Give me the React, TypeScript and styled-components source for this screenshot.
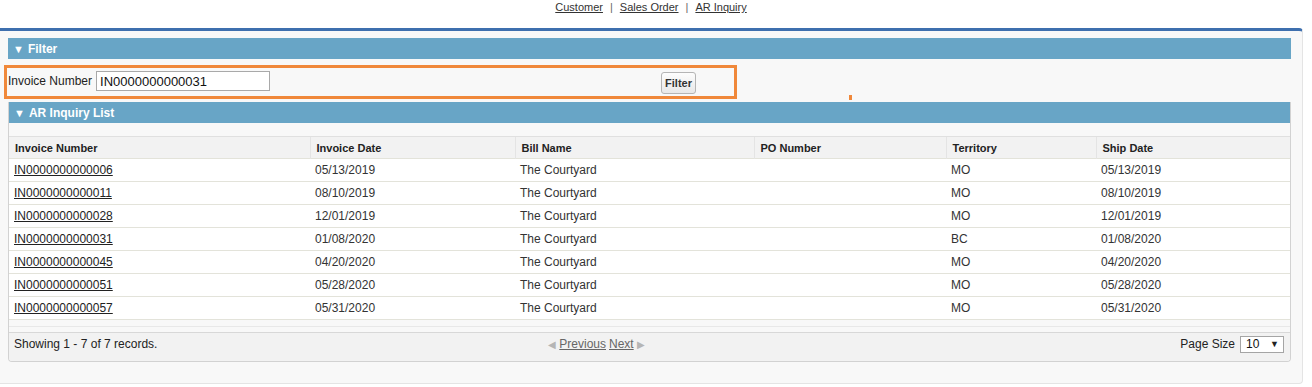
import React from 'react';
import styled, { createGlobalStyle } from 'styled-components';

const GlobalStyle = createGlobalStyle`
  body {
    margin: 0;
    background: #fff;
    font-family: "Liberation Sans", Arial, sans-serif;
    color: #333;
  }
`;

const rows = [
  { no: 'IN0000000000006', date: '05/13/2019', terr: 'MO', ship: '05/13/2019' },
  { no: 'IN0000000000011', date: '08/10/2019', terr: 'MO', ship: '08/10/2019' },
  { no: 'IN0000000000028', date: '12/01/2019', terr: 'MO', ship: '12/01/2019' },
  { no: 'IN0000000000031', date: '01/08/2020', terr: 'BC', ship: '01/08/2020' },
  { no: 'IN0000000000045', date: '04/20/2020', terr: 'MO', ship: '04/20/2020' },
  { no: 'IN0000000000051', date: '05/28/2020', terr: 'MO', ship: '05/28/2020' },
  { no: 'IN0000000000057', date: '05/31/2020', terr: 'MO', ship: '05/31/2020' },
];

const columns = [
  { label: 'Invoice Number', width: 301 },
  { label: 'Invoice Date', width: 205 },
  { label: 'Bill Name', width: 239 },
  { label: 'PO Number', width: 192 },
  { label: 'Territory', width: 150 },
  { label: 'Ship Date', width: 0 },
];

function App() {
  return (
    <>
      <GlobalStyle />
      <TopNav>
        <NavLink href="#">Customer</NavLink>
        <Sep>|</Sep>
        <NavLink href="#">Sales Order</NavLink>
        <Sep>|</Sep>
        <NavLink href="#">AR Inquiry</NavLink>
      </TopNav>
      <Panel>
        <SectionHeader><Caret>▼</Caret>Filter</SectionHeader>
        <FilterRow>
          <Highlight />
          <Mark />
          <Label>Invoice Number</Label>
          <TextInput defaultValue="IN0000000000031" />
          <Button>Filter</Button>
        </FilterRow>
        <ListPanel>
          <SectionHeader><Caret>▼</Caret>AR Inquiry List</SectionHeader>
          <Grid>
            <colgroup>
              {columns.map((c) => (
                <col key={c.label} style={c.width ? { width: c.width } : undefined} />
              ))}
            </colgroup>
            <thead>
              <tr>
                {columns.map((c) => (
                  <Th key={c.label}>{c.label}</Th>
                ))}
              </tr>
            </thead>
            <tbody>
              {rows.map((r) => (
                <tr key={r.no}>
                  <Td><RowLink href="#">{r.no}</RowLink></Td>
                  <Td>{r.date}</Td>
                  <Td>The Courtyard</Td>
                  <Td></Td>
                  <Td>{r.terr}</Td>
                  <Td>{r.ship}</Td>
                </tr>
              ))}
            </tbody>
          </Grid>
          <Strip />
          <Footer>
            <span>Showing 1 - 7 of 7 records.</span>
            <Pager>
              <Arrow>◀</Arrow>
              <PageLink href="#">Previous</PageLink>
              <PageLink href="#">Next</PageLink>
              <Arrow>▶</Arrow>
            </Pager>
            <PageSize>
              Page Size
              <Select>
                <span>10</span>
                <SelectArrow>▼</SelectArrow>
              </Select>
            </PageSize>
          </Footer>
        </ListPanel>
      </Panel>
    </>
  );
}

const TopNav = styled.nav`
  width: 1302px;
  height: 28px;
  display: flex;
  justify-content: center;
  align-items: flex-start;
  gap: 7px;
  font-size: 11px;
  line-height: 14px;
  color: #555;
`;

const NavLink = styled.a`
  color: #333;
  text-decoration: underline;
`;

const Sep = styled.span`
  color: #666;
`;

const Panel = styled.section`
  width: 1283px;
  border-top: 3px solid #3e6fae;
  border-right: 1px solid #e4e4e4;
  border-bottom: 1px solid #e4e4e4;
  border-radius: 0 4px 4px 0;
  background: #f8f8f8;
  padding: 7px 11px 21px 8px;
`;

const SectionHeader = styled.div`
  height: 21px;
  display: flex;
  align-items: center;
  background: #68a5c6;
  color: #fff;
  font-size: 12px;
  font-weight: bold;
  padding-left: 5px;
`;

const Caret = styled.span`
  font-size: 11px;
  margin-right: 4px;
`;

const FilterRow = styled.div`
  position: relative;
  height: 43px;
  display: flex;
  align-items: center;
  font-size: 12px;
  color: #222;
`;

const Highlight = styled.div`
  position: absolute;
  left: -4px;
  top: 6px;
  width: 727px;
  height: 28px;
  border: 3px solid #f0883a;
  pointer-events: none;
`;

const Mark = styled.div`
  position: absolute;
  left: 841px;
  top: 36px;
  width: 3px;
  height: 5px;
  background: #f0883a;
`;

const Label = styled.label`
  margin-right: 4px;
  margin-top: 1px;
`;

const TextInput = styled.input`
  box-sizing: border-box;
  width: 174px;
  height: 20px;
  border: 1px solid #a9a9a9;
  padding: 0 3px;
  font-family: "Liberation Sans", Arial, sans-serif;
  font-size: 13px;
  color: #111;
  background: #fff;
  margin-top: 1px;
`;

const Button = styled.button`
  box-sizing: border-box;
  margin-left: 391px;
  margin-top: 5px;
  height: 22px;
  width: 35px;
  padding: 0;
  border: 1px solid #b5b5b5;
  border-radius: 3px;
  background: linear-gradient(#fdfdfd, #e8e8e8);
  font-family: "Liberation Sans", Arial, sans-serif;
  font-size: 11px;
  font-weight: bold;
  color: #333;
`;

const ListPanel = styled.div`
  border: 1px solid #d2d2d2;
  border-top: none;
  border-radius: 0 0 4px 4px;
  background: #f8f8f8;
  overflow: hidden;
`;

const Grid = styled.table`
  width: 100%;
  margin-top: 13px;
  border-collapse: collapse;
  table-layout: fixed;
  font-size: 12px;
`;

const Th = styled.th`
  height: 21px;
  text-align: left;
  font-size: 11px;
  font-weight: bold;
  color: #222;
  padding: 0 6px;
  background: #f2f2f2;
  border-top: 1px solid #e0e0e0;
  border-left: 1px solid #e4e4e4;
  &:first-child {
    border-left: none;
  }
`;

const Td = styled.td`
  height: 22px;
  padding: 0 5px;
  background: #fff;
  color: #333;
  border-top: 1px solid #e3e3da;
  tr:last-child & {
    border-bottom: 1px solid #e3e3da;
  }
`;

const RowLink = styled.a`
  color: #222;
  text-decoration: underline;
`;

const Strip = styled.div`
  height: 6px;
  border-bottom: 1px solid #e8e8e8;
  margin-bottom: 5px;
`;

const Footer = styled.div`
  box-sizing: border-box;
  height: 29px;
  display: grid;
  grid-template-columns: 1fr auto 1fr;
  align-items: center;
  padding: 0 5px 6px;
  background: #f2f2f2;
  border-top: 1px solid #d8d8d8;
  font-size: 12px;
  color: #222;
`;

const Pager = styled.div`
  display: flex;
  align-items: center;
  gap: 3px;
  margin-right: 106px;
`;

const Arrow = styled.span`
  font-size: 10px;
  color: #b5b5b5;
`;

const PageLink = styled.a`
  color: #666;
  text-decoration: underline;
`;

const PageSize = styled.div`
  justify-self: end;
  display: flex;
  align-items: center;
  gap: 5px;
  margin-right: 1px;
`;

const Select = styled.div`
  box-sizing: border-box;
  width: 44px;
  height: 17px;
  display: flex;
  align-items: center;
  justify-content: space-between;
  padding: 0 4px 0 5px;
  background: #fff;
  border: 1px solid #a5a5a5;
  font-size: 12px;
  color: #111;
`;

const SelectArrow = styled.span`
  font-size: 9px;
  color: #222;
`;

export default App;
